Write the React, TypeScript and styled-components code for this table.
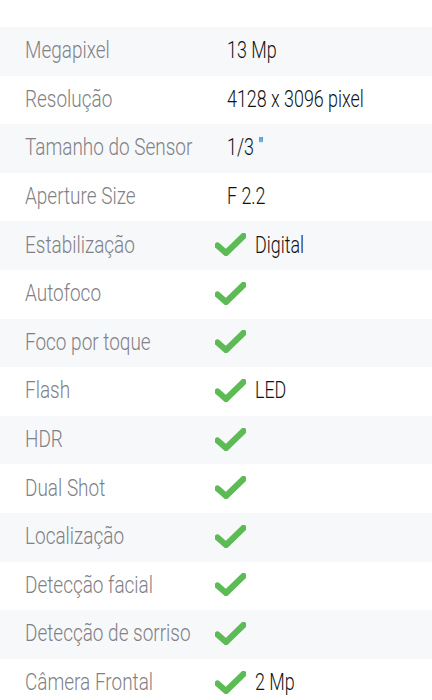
import React from "react";
import styled, { createGlobalStyle } from "styled-components";

const Global = createGlobalStyle`
  html, body { margin: 0; padding: 0; background: #fff; }
  body { font-family: Roboto, "Noto Sans", sans-serif; overflow: hidden; }
`;

const Page = styled.div`
  width: 432px;
  padding-top: 27px;
`;

const Table = styled.div`
  display: flex;
  flex-direction: column;
`;

const Row = styled.div<{ $shade: boolean }>`
  display: grid;
  grid-template-columns: 202px 1fr;
  align-items: center;
  height: 48.6px;
  padding-left: 25px;
  background: ${(p) => (p.$shade ? "#f7f8fa" : "#ffffff")};
`;

const Text = styled.span<{ $tone: "label" | "value" }>`
  display: inline-block;
  font-family: Roboto, sans-serif;
  font-size: 24px;
  line-height: 28px;
  font-weight: 300;
  color: ${(p) => (p.$tone === "label" ? "#7f8186" : "#111111")};
  white-space: nowrap;
  transform: translateY(-1.5px) scaleX(${(p) => (p.$tone === "label" ? 0.79 : 0.745)});
  transform-origin: left center;
`;

const Label = styled.div`
  display: flex;
  align-items: center;
`;

const Value = styled.div`
  display: flex;
  align-items: center;
  gap: 9px;
`;

const CheckWrap = styled.span`
  display: inline-flex;
  margin-left: -12px;
  margin-top: -2px;
`;

const Check = () => (
  <CheckWrap>
    <svg width="31" height="23" viewBox="0 0 31 23">
      <path
        d="M2.5 12.5 L11 20 L28.5 3"
        fill="none"
        stroke="#5dbb55"
        strokeWidth="6.2"
        strokeLinecap="round"
        strokeLinejoin="round"
      />
    </svg>
  </CheckWrap>
);

type Item = { label: string; value?: string; check?: boolean };

const items: Item[] = [
  { label: "Megapixel", value: "13 Mp" },
  { label: "Resolução", value: "4128 x 3096 pixel" },
  { label: "Tamanho do Sensor", value: '1/3 "' },
  { label: "Aperture Size", value: "F 2.2" },
  { label: "Estabilização", check: true, value: "Digital" },
  { label: "Autofoco", check: true },
  { label: "Foco por toque", check: true },
  { label: "Flash", check: true, value: "LED" },
  { label: "HDR", check: true },
  { label: "Dual Shot", check: true },
  { label: "Localização", check: true },
  { label: "Detecção facial", check: true },
  { label: "Detecção de sorriso", check: true },
  { label: "Câmera Frontal", check: true, value: "2 Mp" },
];

export default function App() {
  return (
    <Page>
      <Global />
      <Table>
        {items.map((it, i) => (
          <Row key={it.label} $shade={i % 2 === 0}>
            <Label>
              <Text $tone="label">{it.label}</Text>
            </Label>
            <Value>
              {it.check && <Check />}
              {it.value && <Text $tone="value">{it.value}</Text>}
            </Value>
          </Row>
        ))}
      </Table>
    </Page>
  );
}
